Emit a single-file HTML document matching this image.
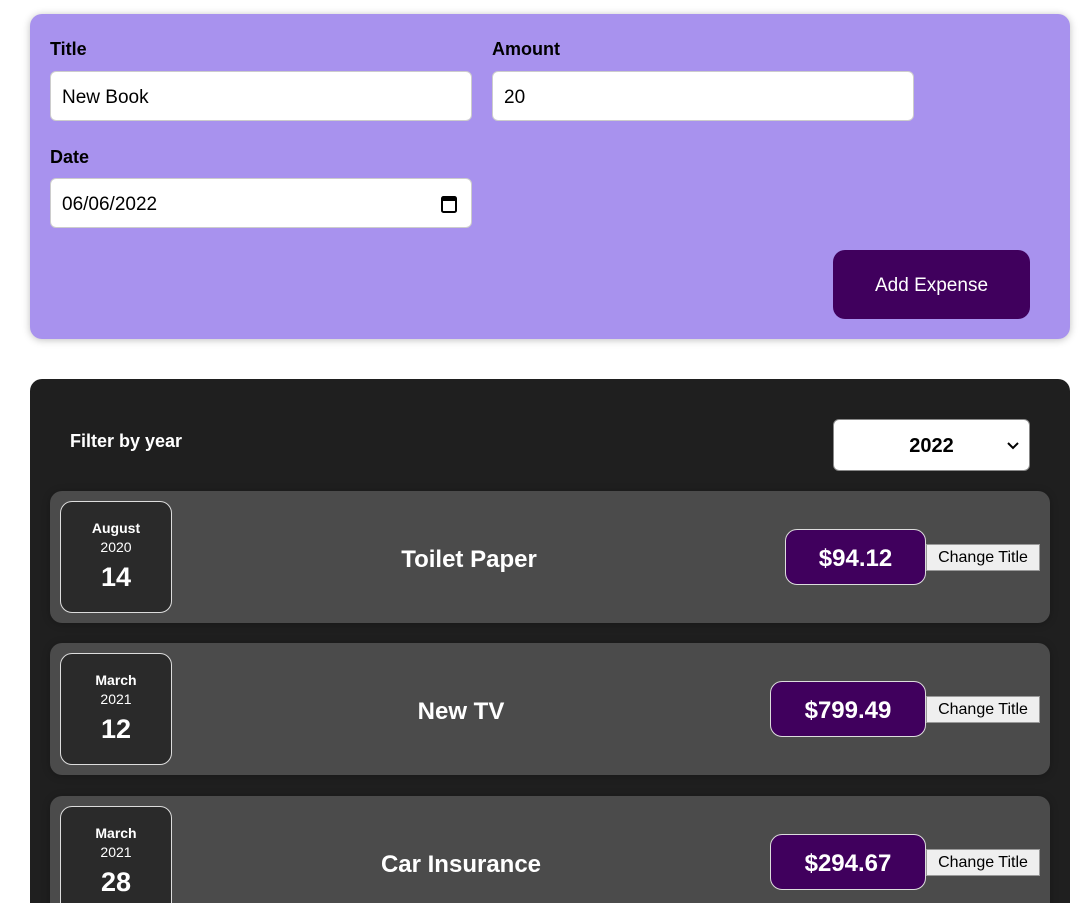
<!DOCTYPE html>
<html><head><meta charset="utf-8"><style>
*{box-sizing:border-box}
html,body{margin:0;background:#fff;font-family:"Liberation Sans",sans-serif;width:1082px;height:903px;overflow:hidden;position:relative}
.form{position:absolute;left:30px;top:14px;width:1040px;height:325px;background:#a892ee;border-radius:12px;box-shadow:0 1px 8px rgba(0,0,0,.25)}
.lbl{position:absolute;font-weight:bold;font-size:18px;color:#000}
.inp{position:absolute;background:#fff;border:1px solid #ccc;border-radius:6px;height:50px;width:422px;font-size:19px;padding:15px 11px;color:#000}
.btn{position:absolute;left:803px;top:236px;width:197px;height:69px;background:#40005d;color:#fff;border-radius:12px;font-size:19px;text-align:center;line-height:72px}
.list{position:absolute;left:30px;top:379px;width:1040px;height:600px;background:#1f1f1f;border-radius:12px}
.fl{position:absolute;left:40px;top:52px;color:#fff;font-weight:bold;font-size:18px}
.sel{position:absolute;left:803px;top:40px;width:197px;height:52px;background:#fff;border-radius:6px;border:1px solid #888;font-weight:bold;font-size:20px;text-align:center;line-height:52px;color:#000}
.item{position:absolute;left:20px;width:1000px;height:132px;background:#4b4b4b;border-radius:12px;box-shadow:0 1px 8px rgba(0,0,0,.25)}
.date{position:absolute;left:10px;top:10px;width:112px;height:112px;border:1px solid #ddd;border-radius:12px;background:#2a2a2a;color:#fff;text-align:center}
.m{font-weight:bold;font-size:14px;margin-top:18px}
.y{font-size:14px;margin-top:3px}
.d{font-weight:bold;font-size:27px;margin-top:7px}
.t{position:absolute;top:55px;color:#fff;font-weight:bold;font-size:24px;width:100%;text-align:center;left:0;padding-right:160px}
.amt{position:absolute;top:38px;height:56px;background:#40005d;border:1px solid #ddd;border-radius:12px;color:#fff;font-weight:bold;font-size:24px;text-align:center;line-height:58px}
.ch{position:absolute;left:876px;top:53px;width:114px;height:27px;background:#efefef;border:1px solid #999;font-size:16px;text-align:center;line-height:25px;color:#000}
</style></head><body>
<div class="form">
<div class="lbl" style="left:20px;top:25px">Title</div>
<div class="inp" style="left:20px;top:57px">New Book</div>
<div class="lbl" style="left:462px;top:25px">Amount</div>
<div class="inp" style="left:462px;top:57px">20</div>
<div class="lbl" style="left:20px;top:133px">Date</div>
<div class="inp" style="left:20px;top:164px">06/06/2022
<svg style="position:absolute;right:14px;top:16px" width="16" height="18" viewBox="0 0 16 18"><rect x="1" y="2" width="14" height="15" rx="1.5" fill="none" stroke="#000" stroke-width="2"/><rect x="1" y="2" width="14" height="4" fill="#000"/></svg></div>
<div class="btn">Add Expense</div>
</div>
<div class="list">
<div class="fl">Filter by year</div>
<div class="sel">2022<svg style="position:absolute;right:10px;top:22px" width="12" height="8" viewBox="0 0 12 8"><path d="M1 1l5 5 5-5" fill="none" stroke="#000" stroke-width="2"/></svg></div>
<div class="item" style="top:112px"><div class="date"><div class="m">August</div><div class="y">2020</div><div class="d">14</div></div><div class="t" style="padding-right:162px">Toilet Paper</div><div class="amt" style="left:735px;width:141px">$94.12</div><div class="ch">Change Title</div></div>
<div class="item" style="top:264px"><div class="date"><div class="m">March</div><div class="y">2021</div><div class="d">12</div></div><div class="t" style="padding-right:178px">New TV</div><div class="amt" style="left:720px;width:156px">$799.49</div><div class="ch">Change Title</div></div>
<div class="item" style="top:417px"><div class="date"><div class="m">March</div><div class="y">2021</div><div class="d">28</div></div><div class="t" style="padding-right:178px">Car Insurance</div><div class="amt" style="left:720px;width:156px">$294.67</div><div class="ch">Change Title</div></div>
</div>
</body></html>
